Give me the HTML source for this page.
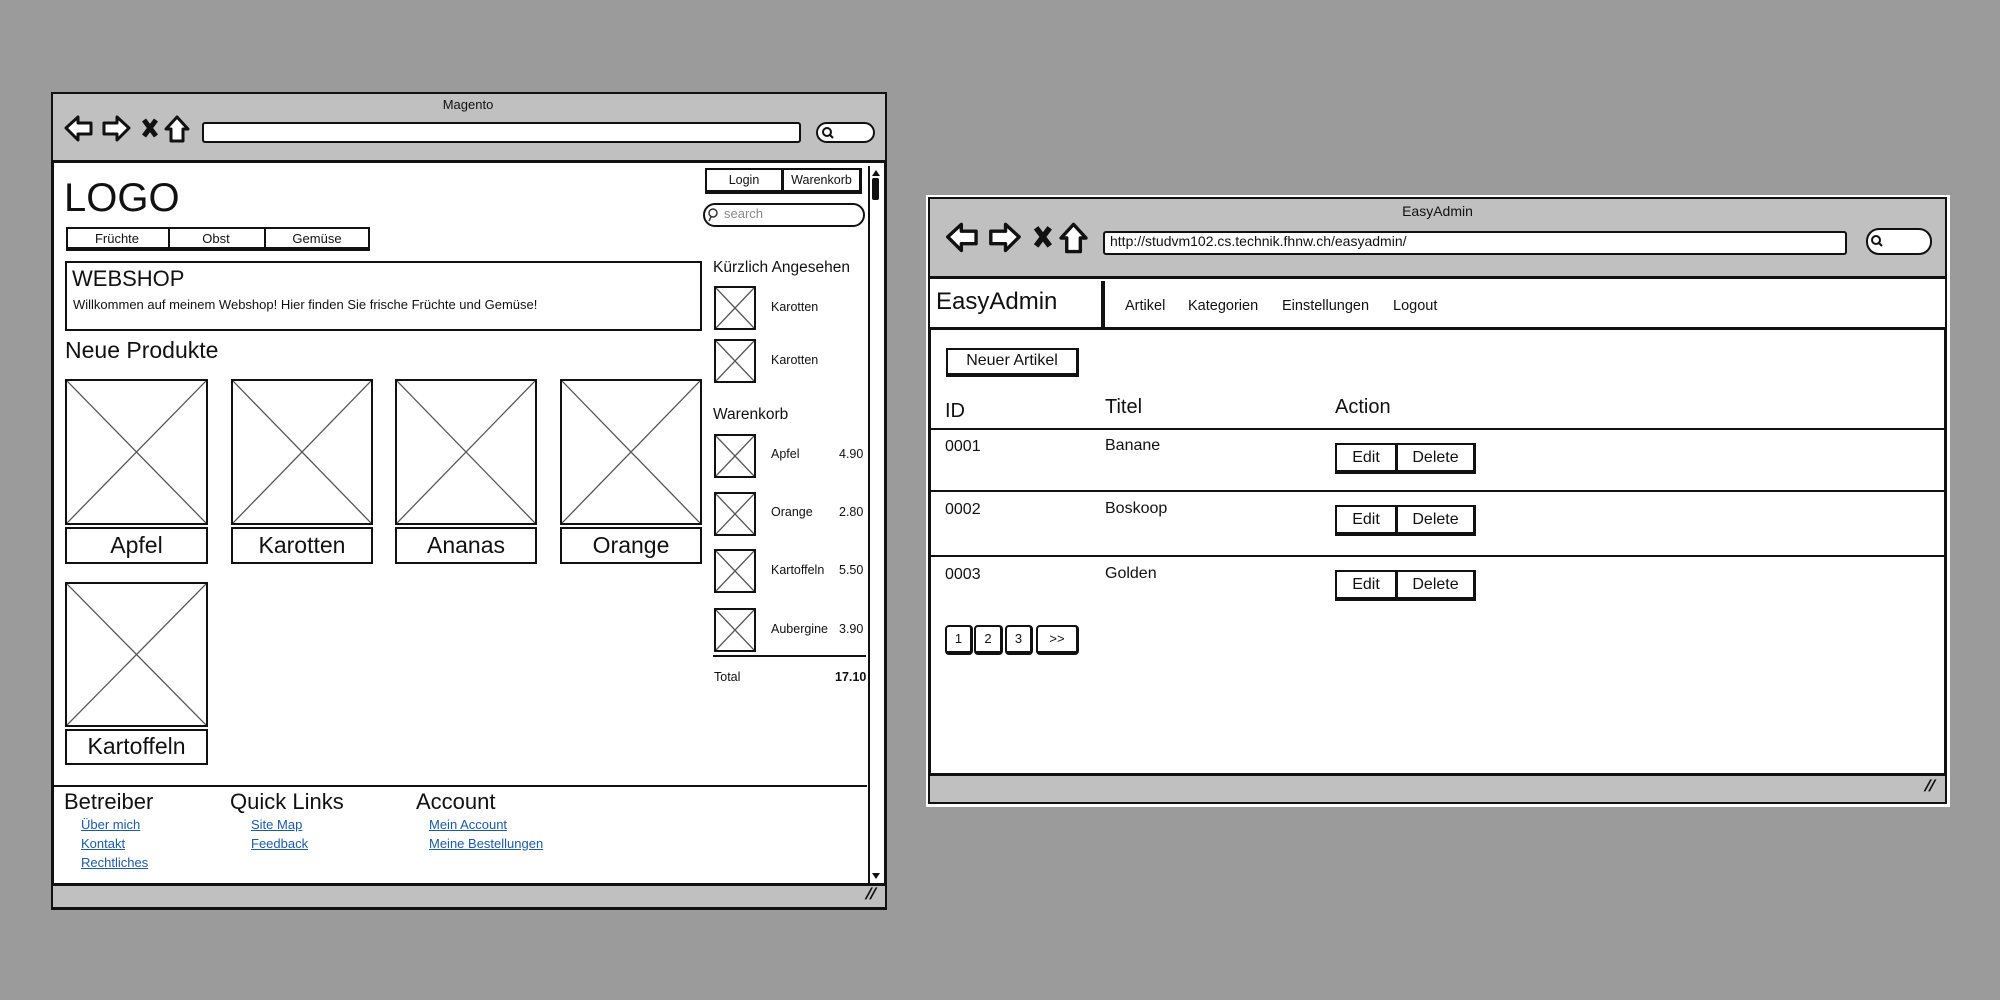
<!DOCTYPE html>
<html><head><meta charset="utf-8"><style>
*{margin:0;padding:0;box-sizing:border-box}
body{width:2000px;height:1000px;background:#9b9b9b;position:relative;overflow:hidden;font-family:"Liberation Sans",sans-serif;color:#111}
.a{position:absolute}
.b{border:2.5px solid #111}
.ph{position:absolute;border:2.5px solid #111;background:#fff}
.ph svg{position:absolute;left:0;top:0;width:100%;height:100%}
.t{position:absolute;white-space:nowrap}
.lnk{color:#1d5aa6;text-decoration:underline;font-size:13px}
.btn{position:absolute;border:2px solid #111;border-bottom:4px solid #111;border-right:3px solid #111;background:#fff;text-align:center}
</style></head><body>

<!-- LEFT WINDOW -->
<div class="a" style="left:51px;top:92px;width:836px;height:818px;background:#fff;border:3px solid #111"></div>
<div class="a" style="left:53px;top:94px;width:832px;height:69px;background:#c0c0c0;border-bottom:3px solid #111"></div>
<div class="t" style="left:0;width:936px;text-align:center;top:97px;font-size:13px">Magento</div>
<svg class="a" style="left:62px;top:114px" width="132" height="30" viewBox="0 0 132 30">
<path d="M4 14 L16 3 L16 9 L29 9 L29 20 L16 20 L16 26 Z" fill="#fff" stroke="#111" stroke-width="3" stroke-linejoin="round"/>
<path d="M67 14 L55 3 L55 9 L42 9 L42 20 L55 20 L55 26 Z" fill="#fff" stroke="#111" stroke-width="3" stroke-linejoin="round"/>
<path d="M82 6 L94 22 M94 6 L82 22" stroke="#111" stroke-width="5"/>
<path d="M115 3 L104 15 L109 15 L109 27 L121 27 L121 15 L126 15 Z" fill="#fff" stroke="#111" stroke-width="3" stroke-linejoin="round"/>
</svg>
<div class="a b" style="left:202px;top:122px;width:599px;height:21px;background:#fff;border-radius:3px"></div>
<div class="a b" style="left:816px;top:122px;width:59px;height:21px;background:#fff;border-radius:11px"></div>
<svg class="a" style="left:821px;top:126px" width="14" height="14"><circle cx="6" cy="6" r="4" fill="none" stroke="#111" stroke-width="2"/><path d="M9 9 L12 12" stroke="#111" stroke-width="2"/></svg>
<!-- scrollbar -->
<div class="a" style="left:868px;top:166px;width:15px;height:717px;border-left:2px solid #111;background:#fff"></div>
<svg class="a" style="left:871px;top:168px" width="10" height="10"><path d="M1 8 L5 2 L9 8Z" fill="#111"/></svg>
<div class="a" style="left:872px;top:178px;width:7px;height:22px;background:#111;border-radius:2px"></div>
<svg class="a" style="left:871px;top:871px" width="10" height="10"><path d="M1 2 L5 8 L9 2Z" fill="#111"/></svg>
<div class="a" style="left:53px;top:883px;width:832px;height:24px;background:#c0c0c0;border-top:3px solid #111"></div>
<div class="t" style="left:866px;top:886px;font-size:16px;font-weight:bold;transform:skewX(-20deg)">//</div>

<div class="t" style="left:64px;top:176px;font-size:40px">LOGO</div>
<div class="a" style="left:66px;top:227px;width:304px;height:24px;border:2px solid #111;border-bottom:4px solid #111;background:#fff"></div>
<div class="a" style="left:168px;top:227px;width:2px;height:24px;background:#111"></div>
<div class="a" style="left:264px;top:227px;width:2px;height:24px;background:#111"></div>
<div class="t" style="left:66px;width:102px;text-align:center;top:231px;font-size:13px">Früchte</div>
<div class="t" style="left:168px;width:96px;text-align:center;top:231px;font-size:13px">Obst</div>
<div class="t" style="left:264px;width:106px;text-align:center;top:231px;font-size:13px">Gemüse</div>

<div class="a b" style="left:65px;top:261px;width:637px;height:70px"></div>
<div class="t" style="left:72px;top:266px;font-size:22px">WEBSHOP</div>
<div class="t" style="left:73px;top:297px;font-size:13px">Willkommen auf meinem Webshop! Hier finden Sie frische Früchte und Gemüse!</div>
<div class="t" style="left:65px;top:337px;font-size:23px">Neue Produkte</div>

<div class="ph" style="left:65px;top:379px;width:143px;height:146px"><svg viewBox="0 0 100 100" preserveAspectRatio="none"><path d="M0 0L100 100M100 0L0 100" stroke="#555" stroke-width="1.3" vector-effect="non-scaling-stroke"/></svg></div>
<div class="ph" style="left:231px;top:379px;width:142px;height:146px"><svg viewBox="0 0 100 100" preserveAspectRatio="none"><path d="M0 0L100 100M100 0L0 100" stroke="#555" stroke-width="1.3" vector-effect="non-scaling-stroke"/></svg></div>
<div class="ph" style="left:395px;top:379px;width:142px;height:146px"><svg viewBox="0 0 100 100" preserveAspectRatio="none"><path d="M0 0L100 100M100 0L0 100" stroke="#555" stroke-width="1.3" vector-effect="non-scaling-stroke"/></svg></div>
<div class="ph" style="left:560px;top:379px;width:142px;height:146px"><svg viewBox="0 0 100 100" preserveAspectRatio="none"><path d="M0 0L100 100M100 0L0 100" stroke="#555" stroke-width="1.3" vector-effect="non-scaling-stroke"/></svg></div>
<div class="a b" style="left:65px;top:527px;width:143px;height:37px;text-align:center;font-size:23px;line-height:32px">Apfel</div>
<div class="a b" style="left:231px;top:527px;width:142px;height:37px;text-align:center;font-size:23px;line-height:32px">Karotten</div>
<div class="a b" style="left:395px;top:527px;width:142px;height:37px;text-align:center;font-size:23px;line-height:32px">Ananas</div>
<div class="a b" style="left:560px;top:527px;width:142px;height:37px;text-align:center;font-size:23px;line-height:32px">Orange</div>
<div class="ph" style="left:65px;top:582px;width:143px;height:145px"><svg viewBox="0 0 100 100" preserveAspectRatio="none"><path d="M0 0L100 100M100 0L0 100" stroke="#555" stroke-width="1.3" vector-effect="non-scaling-stroke"/></svg></div>
<div class="a b" style="left:65px;top:729px;width:143px;height:36px;text-align:center;font-size:23px;line-height:31px">Kartoffeln</div>

<!-- right column -->
<div class="btn" style="left:705px;top:168px;width:79px;height:26px;font-size:12.5px;line-height:20px">Login</div>
<div class="btn" style="left:782px;top:168px;width:80px;height:26px;font-size:12.5px;line-height:20px">Warenkorb</div>
<div class="a b" style="left:703px;top:203px;width:162px;height:24px;border-radius:12px;background:#fff"></div>
<svg class="a" style="left:707px;top:207px" width="14" height="15"><circle cx="6" cy="6" r="4" fill="none" stroke="#333" stroke-width="1.5"/><path d="M4 10 L2 14" stroke="#333" stroke-width="1.5"/></svg>
<div class="t" style="left:724px;top:206px;font-size:13px;color:#888">search</div>
<div class="t" style="left:713px;top:259px;font-size:15.5px">Kürzlich Angesehen</div>
<div class="ph" style="left:714px;top:286px;width:42px;height:44px"><svg viewBox="0 0 100 100" preserveAspectRatio="none"><path d="M0 0L100 100M100 0L0 100" stroke="#555" stroke-width="1.3" vector-effect="non-scaling-stroke"/></svg></div>
<div class="ph" style="left:714px;top:339px;width:42px;height:44px"><svg viewBox="0 0 100 100" preserveAspectRatio="none"><path d="M0 0L100 100M100 0L0 100" stroke="#555" stroke-width="1.3" vector-effect="non-scaling-stroke"/></svg></div>
<div class="t" style="left:771px;top:300px;font-size:12.5px">Karotten</div>
<div class="t" style="left:771px;top:353px;font-size:12.5px">Karotten</div>
<div class="t" style="left:713px;top:406px;font-size:15.5px">Warenkorb</div>
<div class="ph" style="left:714px;top:434px;width:42px;height:44px"><svg viewBox="0 0 100 100" preserveAspectRatio="none"><path d="M0 0L100 100M100 0L0 100" stroke="#555" stroke-width="1.3" vector-effect="non-scaling-stroke"/></svg></div>
<div class="ph" style="left:714px;top:492px;width:42px;height:44px"><svg viewBox="0 0 100 100" preserveAspectRatio="none"><path d="M0 0L100 100M100 0L0 100" stroke="#555" stroke-width="1.3" vector-effect="non-scaling-stroke"/></svg></div>
<div class="ph" style="left:714px;top:549px;width:42px;height:44px"><svg viewBox="0 0 100 100" preserveAspectRatio="none"><path d="M0 0L100 100M100 0L0 100" stroke="#555" stroke-width="1.3" vector-effect="non-scaling-stroke"/></svg></div>
<div class="ph" style="left:714px;top:608px;width:42px;height:44px"><svg viewBox="0 0 100 100" preserveAspectRatio="none"><path d="M0 0L100 100M100 0L0 100" stroke="#555" stroke-width="1.3" vector-effect="non-scaling-stroke"/></svg></div>
<div class="t" style="left:771px;top:447px;font-size:12.5px">Apfel</div><div class="t" style="left:839px;top:447px;font-size:12.5px">4.90</div>
<div class="t" style="left:771px;top:505px;font-size:12.5px">Orange</div><div class="t" style="left:839px;top:505px;font-size:12.5px">2.80</div>
<div class="t" style="left:771px;top:563px;font-size:12.5px">Kartoffeln</div><div class="t" style="left:839px;top:563px;font-size:12.5px">5.50</div>
<div class="t" style="left:771px;top:622px;font-size:12.5px">Aubergine</div><div class="t" style="left:839px;top:622px;font-size:12.5px">3.90</div>
<div class="a" style="left:713px;top:655px;width:153px;height:2px;background:#111"></div>
<div class="t" style="left:714px;top:670px;font-size:12.5px">Total</div>
<div class="t" style="left:835px;top:670px;font-size:12.5px;font-weight:bold">17.10</div>

<!-- footer -->
<div class="a" style="left:53px;top:785px;width:814px;height:2px;background:#111"></div>
<div class="t" style="left:64px;top:789px;font-size:22px">Betreiber</div>
<div class="t" style="left:230px;top:789px;font-size:22px">Quick Links</div>
<div class="t" style="left:416px;top:789px;font-size:22px">Account</div>
<div class="t lnk" style="left:81px;top:817px">Über mich</div>
<div class="t lnk" style="left:81px;top:836px">Kontakt</div>
<div class="t lnk" style="left:81px;top:855px">Rechtliches</div>
<div class="t lnk" style="left:251px;top:817px">Site Map</div>
<div class="t lnk" style="left:251px;top:836px">Feedback</div>
<div class="t lnk" style="left:429px;top:817px">Mein Account</div>
<div class="t lnk" style="left:429px;top:836px">Meine Bestellungen</div>

<!-- RIGHT WINDOW -->
<div class="a" style="left:926px;top:195px;width:1024px;height:612px;background:#fff"></div>
<div class="a" style="left:928px;top:197px;width:1019px;height:607px;border:3px solid #111;background:#fff"></div>
<div class="a" style="left:930px;top:199px;width:1015px;height:80px;background:#c0c0c0;border-bottom:3px solid #111"></div>
<div class="t" style="left:928px;width:1019px;text-align:center;top:203px;font-size:14px">EasyAdmin</div>
<svg class="a" style="left:943px;top:221px" width="150" height="34" viewBox="0 0 132 30">
<path d="M4 14 L16 3 L16 9 L29 9 L29 20 L16 20 L16 26 Z" fill="#fff" stroke="#111" stroke-width="3" stroke-linejoin="round"/>
<path d="M67 14 L55 3 L55 9 L42 9 L42 20 L55 20 L55 26 Z" fill="#fff" stroke="#111" stroke-width="3" stroke-linejoin="round"/>
<path d="M82 6 L94 22 M94 6 L82 22" stroke="#111" stroke-width="5"/>
<path d="M115 3 L104 15 L109 15 L109 27 L121 27 L121 15 L126 15 Z" fill="#fff" stroke="#111" stroke-width="3" stroke-linejoin="round"/>
</svg>
<div class="a b" style="left:1103px;top:231px;width:744px;height:24px;background:#fff;border-radius:3px"></div>
<div class="t" style="left:1110px;top:233px;font-size:14px">http://studvm102.cs.technik.fhnw.ch/easyadmin/</div>
<div class="a b" style="left:1866px;top:228px;width:66px;height:27px;background:#fff;border-radius:13px"></div>
<svg class="a" style="left:1870px;top:234px" width="14" height="14"><circle cx="6" cy="6" r="4" fill="none" stroke="#111" stroke-width="2"/><path d="M9 9 L12 12" stroke="#111" stroke-width="2"/></svg>

<div class="a" style="left:930px;top:279px;width:1015px;height:51px;border-bottom:3px solid #111;background:#fff"></div>
<div class="a" style="left:1101px;top:281px;width:4px;height:49px;background:#111"></div>
<div class="t" style="left:936px;top:288px;font-size:24px">EasyAdmin</div>
<div class="t" style="left:1125px;top:298px;font-size:14.5px">Artikel</div>
<div class="t" style="left:1188px;top:298px;font-size:14.5px">Kategorien</div>
<div class="t" style="left:1282px;top:298px;font-size:14.5px">Einstellungen</div>
<div class="t" style="left:1393px;top:298px;font-size:14.5px">Logout</div>

<div class="btn" style="left:946px;top:348px;width:133px;height:29px;font-size:16px;line-height:22px">Neuer Artikel</div>
<div class="t" style="left:945px;top:400px;font-size:20px">ID</div>
<div class="t" style="left:1105px;top:396px;font-size:20px">Titel</div>
<div class="t" style="left:1335px;top:396px;font-size:20px">Action</div>
<div class="a" style="left:930px;top:428px;width:1015px;height:2px;background:#111"></div>
<div class="a" style="left:930px;top:490px;width:1015px;height:2px;background:#111"></div>
<div class="a" style="left:930px;top:555px;width:1015px;height:2px;background:#111"></div>
<div class="t" style="left:945px;top:438px;font-size:16px">0001</div>
<div class="t" style="left:1105px;top:437px;font-size:16px">Banane</div>
<div class="t" style="left:945px;top:501px;font-size:16px">0002</div>
<div class="t" style="left:1105px;top:500px;font-size:16px">Boskoop</div>
<div class="t" style="left:945px;top:566px;font-size:16px">0003</div>
<div class="t" style="left:1105px;top:565px;font-size:16px">Golden</div>

<div class="btn" style="left:1335px;top:443px;width:63px;height:31px;font-size:16px;line-height:25px">Edit</div>
<div class="btn" style="left:1396px;top:443px;width:80px;height:31px;font-size:16px;line-height:25px">Delete</div>
<div class="btn" style="left:1335px;top:505px;width:63px;height:31px;font-size:16px;line-height:25px">Edit</div>
<div class="btn" style="left:1396px;top:505px;width:80px;height:31px;font-size:16px;line-height:25px">Delete</div>
<div class="btn" style="left:1335px;top:570px;width:63px;height:31px;font-size:16px;line-height:25px">Edit</div>
<div class="btn" style="left:1396px;top:570px;width:80px;height:31px;font-size:16px;line-height:25px">Delete</div>

<div class="btn" style="left:945px;top:625px;width:28px;height:30px;font-size:13px;line-height:24px;border-radius:4px">1</div>
<div class="btn" style="left:974px;top:625px;width:29px;height:30px;font-size:13px;line-height:24px;border-radius:4px">2</div>
<div class="btn" style="left:1005px;top:625px;width:28px;height:30px;font-size:13px;line-height:24px;border-radius:4px">3</div>
<div class="btn" style="left:1036px;top:625px;width:43px;height:30px;font-size:13px;line-height:24px;border-radius:4px">&gt;&gt;</div>

<div class="a" style="left:930px;top:773px;width:1015px;height:29px;background:#c0c0c0;border-top:3px solid #111"></div>
<div class="t" style="left:1925px;top:778px;font-size:16px;font-weight:bold;transform:skewX(-20deg)">//</div>
</body></html>
